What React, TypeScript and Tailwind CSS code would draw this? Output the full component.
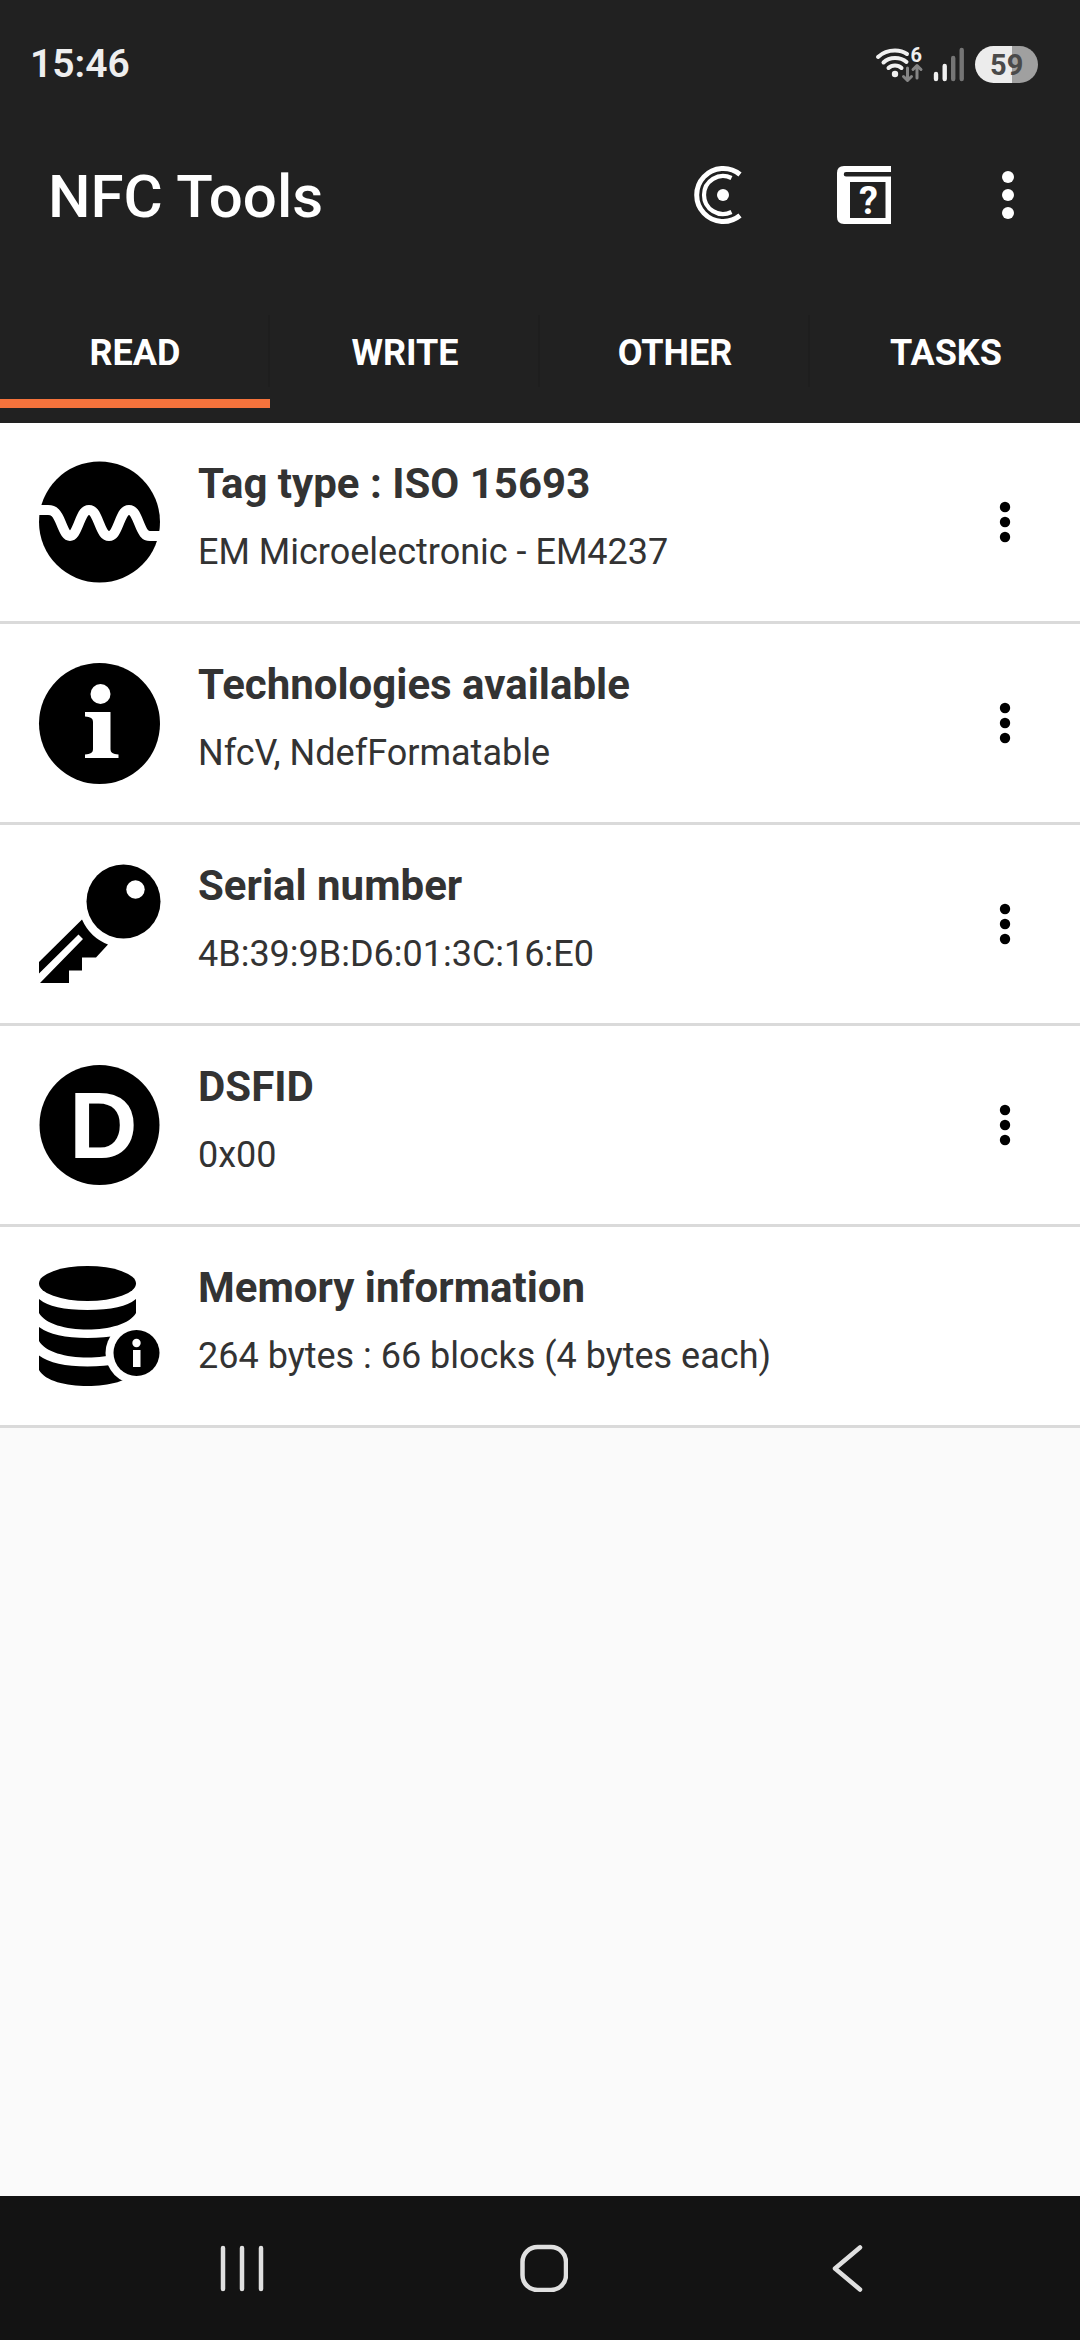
import React, { useState } from "react";

const tabs = ["READ", "WRITE", "OTHER", "TASKS"];

const WaveIcon = () => (
  <svg viewBox="0 0 126 126" className="w-[126px] h-[126px]" aria-hidden="true">
    <circle cx="63.5" cy="63" r="60.5" fill="#000" />
    <path
      d="M0 51H12C18 51 21 54 25 64C29 74 31 77 34 77C37 77 39 74 43 64C47 54 49 51 53 51C57 51 59 54 63 64C67 74 69 77 73 77C77 77 79 74 83 64C87 54 89 51 93 51C97 51 99 54 103 64C107 74 109 77 114 77H126"
      fill="none"
      stroke="#fff"
      strokeWidth="10"
    />
  </svg>
);

const InfoIcon = () => (
  <svg viewBox="0 0 126 126" className="w-[126px] h-[126px]" aria-hidden="true">
    <circle cx="63.5" cy="63.5" r="60.5" fill="#000" />
    <circle cx="64.5" cy="34" r="10" fill="#fff" />
    <path
      d="M49 52H74.5V89C74.5 93 77 94 82.5 94.5V98H49V94.5C54.5 94 57 93 57 89V62C57 58 54.5 57 49 56.5Z"
      fill="#fff"
    />
  </svg>
);

const KeyIcon = () => (
  <svg viewBox="0 0 126 126" className="w-[126px] h-[126px]" aria-hidden="true">
    <circle cx="87.5" cy="40.5" r="37" fill="#000" />
    <circle cx="99.5" cy="28.5" r="9.2" fill="#fff" />
    <path
      d="M46 58.5L3 101V112.500L42.500 73.500L47 78L4 122H33V109.500H46V96.500H60L72 83.500Q54 76.500 46 58.500Z"
      fill="#000"
    />
  </svg>
);

const LetterIcon = () => (
  <svg viewBox="0 0 126 126" className="w-[126px] h-[126px]" aria-hidden="true">
    <circle cx="63.5" cy="63" r="60" fill="#000" />
    <text
      x="33"
      y="96"
      fill="#fff"
      fontSize="95"
      fontWeight="700"
      fontFamily="Liberation Sans, sans-serif"
    >
      D
    </text>
  </svg>
);

const DatabaseIcon = () => (
  <svg viewBox="0 0 126 126" className="w-[126px] h-[126px]" aria-hidden="true">
    <ellipse cx="51.5" cy="20.5" rx="48.5" ry="17.5" fill="#000" />
    <path
      d="M3 36Q16 47 51.5 47Q87 47 100 36V50C94 61 73 66.5 51.5 66.5C30 66.5 9 61 3 50Z"
      fill="#000"
    />
    <path
      d="M3 64Q18 75 51.5 75Q87 75 100 64V78C94 89 73 94.5 51.5 94.5C30 94.5 9 89 3 78Z"
      fill="#000"
    />
    <path
      d="M3 92.5Q18 103.5 51.5 103.5Q87 103.5 100 92.5V107C94 118 73 123 51.5 123C30 123 9 118 3 107Z"
      fill="#000"
    />
    <circle cx="100.5" cy="90" r="31" fill="#fff" />
    <circle cx="100.5" cy="90" r="23" fill="#000" />
    <circle cx="100.5" cy="80" r="4.2" fill="#fff" />
    <rect x="97" y="87" width="7.5" height="17" fill="#fff" />
  </svg>
);

const DotsIcon = () => (
  <svg viewBox="0 0 12 42" className="w-3 h-[42px]" fill="currentColor" aria-hidden="true">
    <circle cx="6" cy="6" r="5.2" />
    <circle cx="6" cy="21" r="5.2" />
    <circle cx="6" cy="36" r="5.2" />
  </svg>
);

const items = [
  { title: "Tag type : ISO 15693", text: "EM Microelectronic - EM4237", Icon: WaveIcon, menu: true },
  { title: "Technologies available", text: "NfcV, NdefFormatable", Icon: InfoIcon, menu: true },
  { title: "Serial number", text: "4B:39:9B:D6:01:3C:16:E0", Icon: KeyIcon, menu: true },
  { title: "DSFID", text: "0x00", Icon: LetterIcon, menu: true },
  { title: "Memory information", text: "264 bytes : 66 blocks (4 bytes each)", Icon: DatabaseIcon, menu: false },
];

const StatusBar = () => (
  <div className="flex items-center justify-between h-[111px] pt-[18px] pl-[30px] pr-[42px]">
    <span className="text-[39px] leading-none font-semibold text-[#eeeeee]">15:46</span>
    {/* wifi, signal and battery */}
    <svg viewBox="0 -8 164 54" className="w-[164px] h-[54px]" aria-hidden="true">
      <g fill="none" stroke="#f0f0f0" strokeWidth="4" strokeLinecap="round">
        <path d="M4 11Q11 4.5 21 4.5Q28 4.5 33 8" />
        <path d="M9.5 16.5Q14 12 21 12Q28 12 32.5 16" />
        <path d="M14.5 22Q17 19.5 21 19.5Q25 19.5 27.5 22" />
      </g>
      <circle cx="21" cy="28" r="3.2" fill="#f0f0f0" />
      <text x="36.5" y="16" fill="#f0f0f0" fontSize="20" fontWeight="700" fontFamily="Roboto, sans-serif">
        6
      </text>
      <g fill="none" stroke="#858585" strokeWidth="3" strokeLinecap="round" strokeLinejoin="round">
        <path d="M33.5 22V34M29.5 30.5L33.5 34.5L37.5 30.5" />
        <path d="M43 32V20M39 23.5L43 19.5L47 23.5" />
      </g>
      <g strokeWidth="4.4" strokeLinecap="round">
        <path d="M62 28V33M70.7 20V33" stroke="#f0f0f0" />
        <path d="M79.2 12V33M87.7 4V33" stroke="#757575" />
      </g>
      <path d="M138 0H119.5A18.5 18.5 0 0 0 119.5 37H138Z" fill="#ececec" />
      <path d="M138 0H145.5A18.5 18.5 0 0 1 145.5 37H138Z" fill="#a0a0a0" />
      <text x="116" y="29" fill="#4a4a4a" fontSize="29" fontWeight="700" fontFamily="Roboto, sans-serif">
        59
      </text>
    </svg>
  </div>
);

const AppBar = () => (
  <div className="flex items-center h-[168px] pl-12">
    <h1 className="flex-1 pt-1 text-[60px] leading-none font-medium">NFC Tools</h1>
    <button type="button" aria-label="Scan" className="flex items-center justify-center w-36 h-36">
      <svg viewBox="0 0 72 72" className="w-[72px] h-[72px]" fill="none" stroke="#fff" aria-hidden="true">
        <path d="M56 15.5A26.5 26.5 0 1 0 56 56.5" strokeWidth="5" />
        <path d="M47.5 19A19 19 0 1 0 47.5 53" strokeWidth="4.2" />
        <circle cx="39" cy="36" r="6" fill="#fff" stroke="none" />
      </svg>
    </button>
    <button type="button" aria-label="Help" className="flex items-center justify-center w-36 h-36">
      <svg viewBox="0 0 72 72" className="w-[72px] h-[72px]" aria-hidden="true">
        <path
          fill="#fff"
          fillRule="evenodd"
          d="M16 7H63V13H18A2.2 2.2 0 0 0 18 17.5H63V65H16Q9 65 9 58V14Q9 7 16 7ZM22 23H57.5V59H22Z"
        />
        <text x="31" y="54.5" fill="#fff" fontSize="38" fontWeight="700" fontFamily="Roboto, sans-serif">
          ?
        </text>
      </svg>
    </button>
    <button type="button" aria-label="More options" className="flex items-center justify-center w-36 h-36">
      <svg viewBox="0 0 12 48" className="w-3 h-12" fill="#fff" aria-hidden="true">
        <circle cx="6" cy="6" r="6" />
        <circle cx="6" cy="24" r="6" />
        <circle cx="6" cy="42" r="6" />
      </svg>
    </button>
  </div>
);

const App: React.FC = () => {
  const [active, setActive] = useState("READ");

  return (
    <div className="flex flex-col w-full min-h-screen bg-[#fafafa] font-['Roboto',sans-serif]">
      <header className="bg-[#212121] text-white">
        <StatusBar />
        <AppBar />
        <nav className="grid grid-cols-4">
          {tabs.map((tab) => (
            <button
              key={tab}
              type="button"
              onClick={() => setActive(tab)}
              className="flex flex-col pt-9 pb-[15px] group"
            >
              <span className="flex items-center justify-center w-full h-[72px] pt-1 pl-0.5 text-4xl font-bold border-r-2 border-[#1e1e1e] group-last:border-r-0">
                {tab}
              </span>
              <span className={`w-full h-[9px] mt-3 ${active === tab ? "bg-[#f5733c]" : ""}`} />
            </button>
          ))}
        </nav>
      </header>

      <main className="flex-1">
        <ul>
          {items.map(({ title, text, Icon, menu }) => (
            <li key={title} className="flex items-center bg-white border-b-[3px] border-[#dadada]">
              <div className="flex items-center flex-1 gap-9 py-9 pl-9">
                <Icon />
                <div className="flex flex-col gap-5 pb-2 text-[#333333]">
                  <h2 className="text-[42px] leading-[48px] font-bold">{title}</h2>
                  <p className="text-4xl leading-[48px]">{text}</p>
                </div>
              </div>
              {menu && (
                <button
                  type="button"
                  aria-label={`Options for ${title}`}
                  className="flex items-center justify-center w-[150px] h-36 text-black"
                >
                  <DotsIcon />
                </button>
              )}
            </li>
          ))}
        </ul>
      </main>

      <footer className="grid grid-cols-3 h-36 pl-[91px] pr-[82px] bg-[#131313]">
        <button type="button" aria-label="Recent apps" className="flex items-center justify-center">
          <svg viewBox="0 0 48 48" className="w-12 h-12" stroke="#e0e0e0" strokeWidth="4.5" strokeLinecap="round" aria-hidden="true">
            <path d="M5 4V45M24 4V45M43 4V45" />
          </svg>
        </button>
        <button type="button" aria-label="Home" className="flex items-center justify-center">
          <svg viewBox="0 0 48 48" className="w-12 h-12" fill="none" stroke="#e0e0e0" strokeWidth="4.5" aria-hidden="true">
            <rect x="2.5" y="3" width="43.5" height="43" rx="15" />
          </svg>
        </button>
        <button type="button" aria-label="Back" className="flex items-center justify-center">
          <svg viewBox="0 0 48 48" className="w-12 h-12" fill="none" stroke="#e0e0e0" strokeWidth="4.5" strokeLinecap="round" strokeLinejoin="round" aria-hidden="true">
            <path d="M37 3.5L12 24.5L37 45.5" />
          </svg>
        </button>
      </footer>
    </div>
  );
};

export default App;
